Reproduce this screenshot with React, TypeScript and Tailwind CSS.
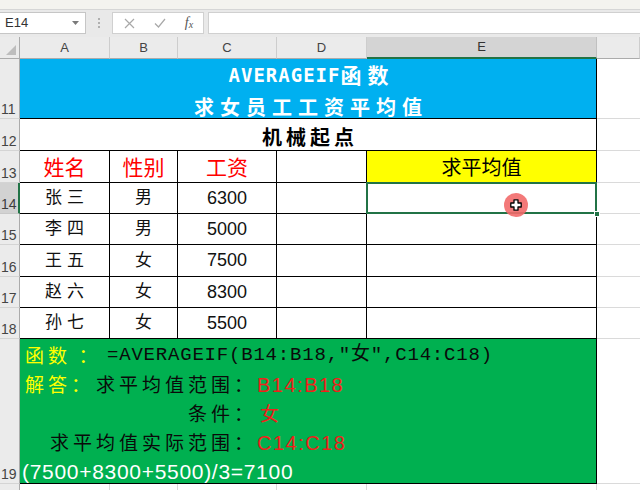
import React from "react";

const people = [
  { n: 14, name: "张三", sex: "男", pay: "6300" },
  { n: 15, name: "李四", sex: "男", pay: "5000" },
  { n: 16, name: "王五", sex: "女", pay: "7500" },
  { n: 17, name: "赵六", sex: "女", pay: "8300" },
  { n: 18, name: "孙七", sex: "女", pay: "5500" },
];

function RowHead({ n, active }: { n?: number | string; active?: boolean }) {
  if (active) {
    return (
      <div className="flex items-end pl-[1px] pb-[1px] bg-[#d2d2d2] border-r-2 border-r-[#217346] border-b border-b-[#c8c8c8] text-[14px] leading-[16px] text-[#3c3c3c]">
        {n}
      </div>
    );
  }
  return (
    <div className="flex items-end pl-[1px] pb-[1px] bg-[#ebebeb] border-r border-r-[#ababab] border-b border-b-[#d4d4d4] text-[14px] leading-[16px] text-[#444]">
      {n}
    </div>
  );
}

function ColHead({ label, active }: { label: string; active?: boolean }) {
  return (
    <div
      className={
        active
          ? "flex items-center justify-center bg-[#d4d4d4] border-r border-r-[#c0c0c0] border-b-2 border-b-[#217346] text-[13px] text-[#333]"
          : "flex items-center justify-center bg-[#ebebeb] border-r border-r-[#cdcdcd] border-b border-b-[#ababab] text-[13px] text-[#444]"
      }
    >
      {label}
    </div>
  );
}

const cell = "border-r border-b border-black bg-white flex items-center justify-center";
const fcell = "border-b border-[#dadada] bg-white";

export default function App() {
  return (
    <div className="w-[640px] h-[490px] overflow-hidden bg-white font-['Liberation_Sans','Noto_Sans_CJK_SC',sans-serif]">
      {/* formula bar */}
      <div className="h-[37px] bg-[#e9e9e9]">
        <div className="h-[10px] bg-[#f4f3ef] border-b border-[#d6d6d6]" />
        <div className="flex mt-[2px] h-[22px]">
          <div className="w-[86px] bg-white border border-l-0 border-[#c6c6c6] flex items-center justify-between pl-[5px] pr-[6px] text-[13px] text-[#333]">
            <span>E14</span>
            <svg width="7" height="4" viewBox="0 0 7 4">
              <path d="M0 0h7L3.5 4z" fill="#7a7a7a" />
            </svg>
          </div>
          <div className="w-[26px] flex flex-col items-center justify-center gap-[2px]">
            <div className="w-[2px] h-[2px] bg-[#b0b0b0]" />
            <div className="w-[2px] h-[2px] bg-[#b0b0b0]" />
            <div className="w-[2px] h-[2px] bg-[#b0b0b0]" />
          </div>
          <div className="w-[92px] bg-white border border-[#d0d0d0] flex items-center">
            <div className="w-[32px] flex justify-center">
              <svg width="11" height="11" viewBox="0 0 11 11">
                <path d="M1 1l9 9M10 1l-9 9" stroke="#a8a8a8" strokeWidth="1.2" />
              </svg>
            </div>
            <div className="w-[30px] flex justify-center">
              <svg width="12" height="10" viewBox="0 0 12 10">
                <path d="M1 5.5l3.5 3.5L11 1" stroke="#a8a8a8" strokeWidth="1.2" fill="none" />
              </svg>
            </div>
            <div className="w-[28px] flex justify-center items-end font-['Liberation_Serif',serif] italic text-[#555]">
              <span className="text-[14px] leading-[14px]">f</span>
              <span className="text-[10px] leading-[10px]">x</span>
            </div>
          </div>
          <div className="ml-[4px] flex-1 bg-white border border-r-0 border-[#d0d0d0]" />
        </div>
      </div>

      {/* sheet */}
      <div className="grid grid-cols-[20px_90px_68px_99px_90px_230px_1fr] grid-rows-[22px_60px_32px_32px_31px_31px_32px_31px_31px_145px_30px]">
        {/* column headers */}
        <div className="bg-[#ebebeb] border-r border-r-[#ababab] border-b border-b-[#ababab] flex items-end justify-end pr-[3px] pb-[3px]">
          <svg width="10" height="10" viewBox="0 0 10 10">
            <path d="M10 0v10H0z" fill="#bdbdbd" />
          </svg>
        </div>
        <ColHead label="A" />
        <ColHead label="B" />
        <ColHead label="C" />
        <ColHead label="D" />
        <ColHead label="E" active />
        <ColHead label="" />

        {/* row 11 */}
        <RowHead n={11} />
        <div className="col-span-5 bg-[#00b0f0] border-r border-b border-black flex flex-col items-center pt-[3px] text-white">
          <div className="flex items-center h-[26px] pl-[7px]">
            <span className="font-['DejaVu_Sans_Mono',monospace] font-bold text-[19px] tracking-[1px]">AVERAGEIF</span>
            <span className="font-['Noto_Sans_CJK_SC',sans-serif] font-bold text-[21px] tracking-[6px]">函数</span>
          </div>
          <div className="mt-[6px] h-[26px] leading-[26px] pl-[6px] font-['Noto_Sans_CJK_SC',sans-serif] font-bold text-[20px] tracking-[6px]">
            求女员工工资平均值
          </div>
        </div>
        <div className={fcell} />

        {/* row 12 */}
        <RowHead n={12} />
        <div className="col-span-5 border-r border-b border-black bg-white flex items-center justify-center pt-[5px] pl-[4px] font-['Noto_Sans_CJK_SC',sans-serif] font-bold text-[20px] tracking-[4px] text-black">
          机械起点
        </div>
        <div className={fcell} />

        {/* row 13 */}
        <RowHead n={13} />
        <div className={`${cell} pt-[2px] text-[21px] text-[#ff0000]`}>姓名</div>
        <div className={`${cell} pt-[2px] text-[21px] text-[#ff0000]`}>性别</div>
        <div className={`${cell} pt-[2px] text-[21px] text-[#ff0000]`}>工资</div>
        <div className={cell} />
        <div className="border-r border-b border-black bg-[#ffff00] flex items-center justify-center pt-[2px] text-[20px] text-black">
          求平均值
        </div>
        <div className={fcell} />

        {/* rows 14-18 */}
        {people.map((p) => (
          <React.Fragment key={p.n}>
            <RowHead n={p.n} active={p.n === 14} />
            <div className={`${cell} pl-[5px] text-[17px] tracking-[5px] text-[#111]`}>{p.name}</div>
            <div className={`${cell} text-[17px] text-[#111]`}>{p.sex}</div>
            <div className={`${cell} text-[18px] text-[#111]`}>{p.pay}</div>
            <div className={cell} />
            {p.n === 14 ? (
              <div className="relative z-10 border-r border-b border-black bg-white">
                <div className="absolute -left-[1px] -top-[1px] -right-[1px] -bottom-[1px] border-2 border-[#217346]" />
                <div className="absolute -right-[4px] -bottom-[4px] w-[6px] h-[6px] bg-[#217346] border border-white" />
                <div className="absolute left-[137px] top-[10px] w-[24px] h-[24px] rounded-full bg-[#f26a6a]/90 flex items-center justify-center">
                  <svg width="12" height="12" viewBox="0 0 12 12">
                    <path
                      d="M4 0.8h4v3.2h3.2v4H8v3.2H4V8H0.8V4H4z"
                      fill="white"
                      stroke="black"
                      strokeWidth="1.3"
                      strokeLinejoin="round"
                    />
                  </svg>
                </div>
              </div>
            ) : (
              <div className={cell} />
            )}
            <div className={fcell} />
          </React.Fragment>
        ))}

        {/* row 19 */}
        <RowHead n={19} />
        <div className="col-span-5 bg-[#00b050] border-r border-b border-black pt-[2px] text-[19px] font-['Noto_Sans_CJK_SC',sans-serif] text-[#0a0a0a]">
          <div className="flex items-center h-[29px] whitespace-nowrap">
            <span className="w-[58px] pl-[5px] text-[#ffff00] tracking-[4px]">函数</span>
            <span className="w-[20px] text-center text-[#ffff00]">：</span>
            <span className="ml-[9px] font-['Liberation_Mono','Noto_Sans_CJK_SC',monospace] tracking-[0.8px]">
              =AVERAGEIF(B14:B18,"女",C14:C18)
            </span>
          </div>
          <div className="flex items-center h-[29px] whitespace-nowrap">
            <div className="w-[237px] flex justify-between">
              <span className="pl-[5px] text-[#ffff00] tracking-[4px]">解答：</span>
              <span className="tracking-[4px]">求平均值范围：</span>
            </div>
            <span className="font-['Liberation_Sans',sans-serif] text-[20px] text-[#f0201a] tracking-[1.5px]">B14:B18</span>
          </div>
          <div className="flex items-center h-[29px] whitespace-nowrap">
            <div className="w-[237px] text-right tracking-[4px]">条件：</div>
            <span className="ml-[3px] text-[#f0201a]">女</span>
          </div>
          <div className="flex items-center h-[29px] whitespace-nowrap">
            <div className="w-[237px] text-right tracking-[4px]">求平均值实际范围：</div>
            <span className="font-['Liberation_Sans',sans-serif] text-[20px] text-[#f0201a] tracking-[1.5px]">C14:C18</span>
          </div>
          <div className="flex items-center h-[29px] whitespace-nowrap pl-[2px] font-['Liberation_Sans',sans-serif] text-[21px] tracking-[0.7px] text-white">
            (7500+8300+5500)/3=7100
          </div>
        </div>
        <div className={fcell} />

        {/* row 20, mostly below the window */}
        <RowHead />
        <div className="border-r border-[#dadada] bg-white" />
        <div className="border-r border-[#dadada] bg-white" />
        <div className="border-r border-[#dadada] bg-white" />
        <div className="border-r border-[#dadada] bg-white" />
        <div className="border-r border-[#dadada] bg-white" />
        <div className="bg-white" />
      </div>
    </div>
  );
}
